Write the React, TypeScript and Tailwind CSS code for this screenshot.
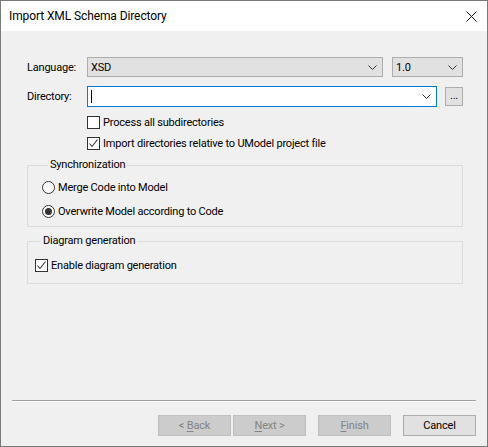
import React from "react";

const font = "font-['Roboto',_'Liberation_Sans',_sans-serif]";

function Chevron() {
  return (
    <svg width="9" height="5" viewBox="0 0 9 5" className="shrink-0">
      <polyline points="0.5,0.5 4.5,4.5 8.5,0.5" fill="none" stroke="#333" strokeWidth="1" />
    </svg>
  );
}

function Checkbox({ checked }: { checked?: boolean }) {
  return (
    <span className="flex h-[13px] w-[13px] shrink-0 items-center justify-center border border-[#333] bg-white">
      {checked && (
        <svg width="11" height="11" viewBox="0 0 11 11">
          <polyline points="1.5,5.5 4,8.5 9.5,1.5" fill="none" stroke="#333" strokeWidth="1.1" />
        </svg>
      )}
    </span>
  );
}

function Radio({ checked }: { checked?: boolean }) {
  return (
    <span className="flex h-[13px] w-[13px] shrink-0 items-center justify-center rounded-full border border-[#333] bg-white">
      {checked && <span className="h-[7px] w-[7px] rounded-full bg-[#333]" />}
    </span>
  );
}

function WizardButton({ label, u, rest, disabled }: { label?: string; u?: string; rest?: string; disabled?: boolean }) {
  return (
    <button
      className={
        disabled
          ? "flex h-[21px] w-[73px] items-center justify-center border border-[#bfbfbf] bg-[#cccccc] text-[#838383]"
          : "flex h-[21px] w-[73px] items-center justify-center border border-[#adadad] bg-[#e1e1e1] text-black"
      }
    >
      <span className="whitespace-pre">
        {label}
        {u && <span className="underline underline-offset-2">{u}</span>}
        {rest}
      </span>
    </button>
  );
}

export default function App() {
  return (
    <div className={`flex h-[447px] w-[488px] flex-col border border-[#7a7a7a] bg-[#f0f0f0] text-[11px] leading-[15px] tracking-[-0.2px] text-black ${font}`}>
      <div className="flex h-[30px] shrink-0 items-center justify-between bg-white pl-[8px] pr-[10px]">
        <span className="text-[12px] tracking-[-0.1px]">Import XML Schema Directory</span>
        <svg width="11" height="11" viewBox="0 0 11 11">
          <path d="M0.5 0.5 L10.5 10.5 M10.5 0.5 L0.5 10.5" stroke="#111" strokeWidth="1" />
        </svg>
      </div>

      <div className="flex flex-1 flex-col">
        <div className="flex flex-col pl-[26px] pr-[24px] pt-[26px]">
          <div className="flex h-[20px] items-center">
            <span className="w-[60px]">Language:</span>
            <div className="flex h-[20px] w-[296px] items-center justify-between border border-[#adadad] bg-[#e1e1e1] pl-[3px] pr-[5px]">
              <span>XSD</span>
              <Chevron />
            </div>
            <div className="ml-[9px] flex h-[20px] w-[71px] items-center justify-between border border-[#adadad] bg-[#e1e1e1] pl-[3px] pr-[5px]">
              <span>1.0</span>
              <Chevron />
            </div>
          </div>

          <div className="mt-[9px] flex h-[21px] items-center">
            <span className="w-[60px]">Directory:</span>
            <div className="flex h-[21px] w-[350px] items-center justify-between border border-[#0078d7] bg-white pl-[3px] pr-[5px]">
              <span className="h-[13px] w-px bg-black" />
              <Chevron />
            </div>
            <div className="ml-[8px] flex h-[19px] w-[18px] items-center justify-center border border-[#adadad] bg-[#e1e1e1] pb-[3px] text-[11px]">
              ...
            </div>
          </div>

          <div className="ml-[60px] mt-[9px] flex h-[13px] items-center gap-[3px]">
            <Checkbox />
            <span>Process all subdirectories</span>
          </div>
          <div className="ml-[60px] mt-[8px] flex h-[13px] items-center gap-[3px]">
            <Checkbox checked />
            <span>Import directories relative to UModel project file</span>
          </div>

          <fieldset className="mt-[8px] h-[69px] border border-[#dcdcdc] px-[14px]">
            <legend className="ml-[6px] px-[2px] leading-[14px]">Synchronization</legend>
            <div className="mt-[9px] flex h-[13px] items-center gap-[3px]">
              <Radio />
              <span>Merge Code into Model</span>
            </div>
            <div className="mt-[11px] flex h-[13px] items-center gap-[3px]">
              <Radio checked />
              <span>Overwrite Model according to Code</span>
            </div>
          </fieldset>

          <fieldset className="mt-[7px] h-[50px] border border-[#dcdcdc] px-[7px]">
            <legend className="ml-[6px] px-[2px] leading-[14px]">Diagram generation</legend>
            <div className="mt-[11px] flex h-[13px] items-center gap-[3px]">
              <Checkbox checked />
              <span>Enable diagram generation</span>
            </div>
          </fieldset>
        </div>

        <div className="flex-1" />

        <div className="px-[11px] pb-[10px]">
          <div className="border-t border-b border-t-[#a0a0a0] border-b-white" />
          <div className="mt-[13px] flex justify-end">
            <WizardButton disabled label="< " u="B" rest="ack" />
            <div className="ml-[2px]">
              <WizardButton disabled u="N" rest="ext >" />
            </div>
            <div className="ml-[12px]">
              <WizardButton disabled u="F" rest="inish" />
            </div>
            <div className="ml-[12px]">
              <WizardButton label="Cancel" />
            </div>
          </div>
        </div>
      </div>
    </div>
  );
}
